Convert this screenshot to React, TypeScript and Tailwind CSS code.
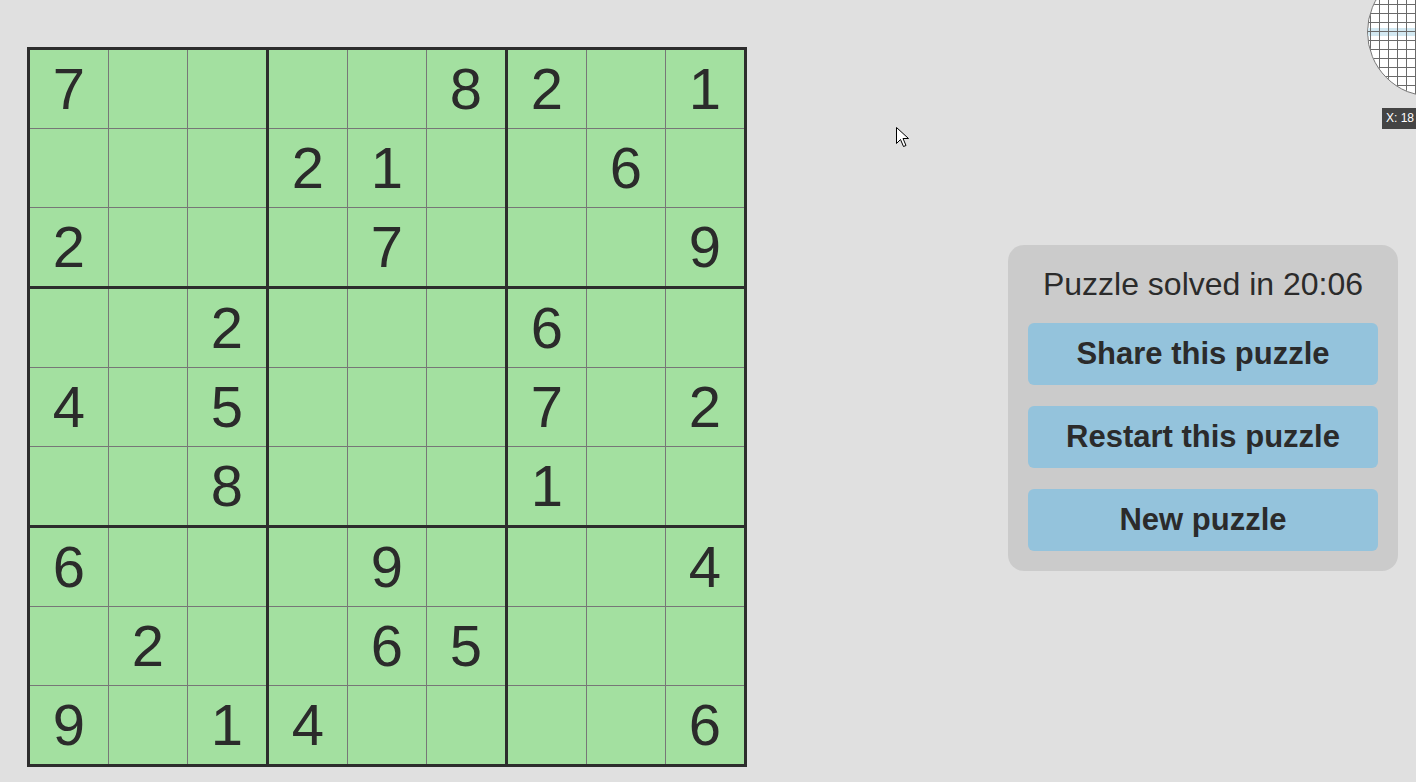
import React from "react";

const rows = [
  "7....82.1",
  "...21..6.",
  "2...7...9",
  "..2...6..",
  "4.5...7.2",
  "..8...1..",
  "6...9...4",
  ".2..65...",
  "9.14....6",
];

function Box({ br, bc }: { br: number; bc: number }) {
  const cells = [];
  for (let r = 0; r < 3; r++) {
    for (let c = 0; c < 3; c++) {
      const ch = rows[br * 3 + r][bc * 3 + c];
      cells.push(
        <div
          key={r * 3 + c}
          className="w-[78px] h-[78px] bg-[#a3e0a0] flex items-center justify-center text-[58px] leading-none text-[#2b2b2b]"
        >
          {ch === "." ? "" : ch}
        </div>
      );
    }
  }
  return <div className="grid grid-cols-3 gap-px bg-[#777777]">{cells}</div>;
}

function Board() {
  const boxes = [];
  for (let br = 0; br < 3; br++)
    for (let bc = 0; bc < 3; bc++) boxes.push(<Box key={br * 3 + bc} br={br} bc={bc} />);
  return (
    <div className="grid grid-cols-3 gap-[3px] bg-[#2d2d2d] p-[3px] shrink-0">{boxes}</div>
  );
}

function Magnifier() {
  const lines = [];
  for (let i = 0; i < 16; i++) {
    lines.push(<line key={"v" + i} x1={i * 9 + 2.5} y1={0} x2={i * 9 + 2.5} y2={140} stroke="#6a6a6a" strokeWidth={1} />);
    lines.push(<line key={"h" + i} x1={0} y1={i * 9 + 0.5} x2={140} y2={i * 9 + 0.5} stroke="#6a6a6a" strokeWidth={1} />);
  }
  return (
    <div className="absolute left-[1367px] top-[-33px] w-[130px] h-[130px] rounded-full overflow-hidden border border-[#777] bg-white">
      <svg width="130" height="130" className="block">
        <rect x="0" y="60" width="130" height="8" fill="#d2e8f1" />
        <g>{lines}</g>
      </svg>
    </div>
  );
}

export default function App() {
  return (
    <div
      className="relative w-[1416px] h-[782px] overflow-hidden bg-[#e0e0e0]"
      style={{ fontFamily: '"Liberation Sans", Arial, sans-serif' }}
    >
      <div className="flex items-start pt-[47px] pl-[27px] pr-[18px]">
        <Board />
        <div className="ml-auto mt-[198px] w-[390px] rounded-[16px] bg-[#cbcbcb] px-5 pt-[21px] pb-5 flex flex-col gap-[21px] text-[#2b2b2b]">
          <div className="text-center text-[32px] leading-[36px]">Puzzle solved in 20:06</div>
          {["Share this puzzle", "Restart this puzzle", "New puzzle"].map((t) => (
            <button
              key={t}
              className="h-[62px] w-full rounded-[6px] bg-[#94c3dc] text-[31px] font-bold text-[#2b2b2b]"
            >
              {t}
            </button>
          ))}
        </div>
      </div>

      <Magnifier />
      <div className="absolute left-[1382px] top-[108px] h-[21px] bg-[#444] text-white text-[12px] leading-[21px] px-[4px] whitespace-nowrap">
        X: 18
      </div>

      <svg className="absolute left-[896px] top-[127px]" width="14" height="22" viewBox="0 0 14 22">
        <path d="M0.5 0.5 L0.5 16.5 L4.5 12.5 L7.5 19.5 L10 18.5 L7 11.5 L12.5 11.5 Z" fill="white" stroke="black" strokeWidth="1" />
      </svg>
    </div>
  );
}
